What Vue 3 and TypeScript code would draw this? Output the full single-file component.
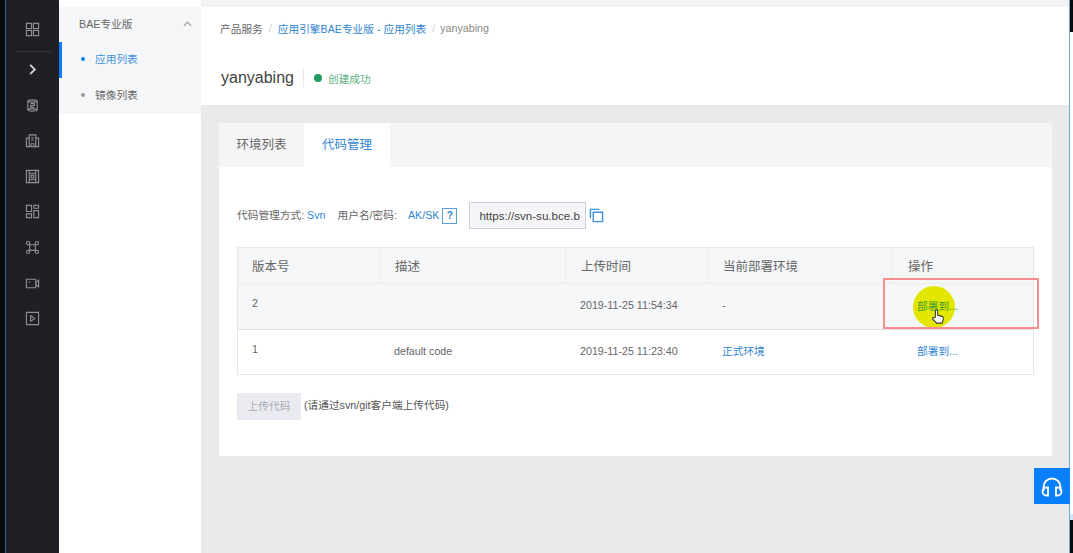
<script setup lang="ts">
const railIcons: string[] = [
  "M3 3.5c0-1 2-1.5 5-1.5s5 .5 5 1.5v9c0 1-2 1.5-5 1.5s-5-.5-5-1.5zM3 3.8c1 .8 9 .8 10 0M3 12.2c1-.8 9-.8 10 0M6 6h4v2H6v2h4",
  "M1.5 5.5h3v9h-3zM11.5 5.5h3v9h-3zM4.5 2h7v12.5h-7zM6.5 5h3M6.5 7.5h3M6.5 14.5v-3h3v3",
  "M1.5 1.5h13v13h-13zM4.5 1.5v13M11.5 1.5v13M4.5 4.5h7M4.5 11.5h7M6.5 6.5h3v3h-3z",
  "M1.5 1.5h5.5v6.5H1.5zM9.5 1.5h5v3h-5zM9.5 7h5v7.5h-5zM1.5 10.5h5.5v4H1.5z",
  "M5 5h6v6H5zM5 5H3a1.7 1.7 0 1 1 2-2zM11 5V3a1.7 1.7 0 1 1 2 2zM11 11h2a1.7 1.7 0 1 1-2 2zM5 11v2a1.7 1.7 0 1 1-2-2z",
  "M1.5 3.5h10v9h-10zM11.5 7l3-2.5v7l-3-2.5zM4 6.5h1.5",
  "M1.5 1.5h13v13h-13zM6 5l4.5 3L6 11z",
];

interface VersionRow {
  version: string;
  desc: string;
  time: string;
  env: string;
  active: boolean;
}

const rows: VersionRow[] = [
  { version: "2", desc: "", time: "2019-11-25 11:54:34", env: "-", active: true },
  { version: "1", desc: "default code", time: "2019-11-25 11:23:40", env: "正式环境", active: false },
];
</script>

<template>
  <div class="shell">
    <aside class="rail">
      <svg class="rail-icon" viewBox="0 0 16 16"><path d="M1.5 1.5h5.5v5.5H1.5zM9 1.5h5.5v5.5H9zM1.5 9h5.5v5.5H1.5zM9 9h5.5v5.5H9z" /></svg>
      <div class="rail-line"></div>
      <svg class="rail-icon rail-arrow" viewBox="0 0 16 16"><path d="M5.5 3l5 5-5 5" /></svg>
      <svg v-for="(d, i) in railIcons" :key="i" class="rail-icon" viewBox="0 0 16 16"><path :d="d" /></svg>
    </aside>

    <nav class="side">
      <div class="side-panel">
        <div class="side-head">
          <span>BAE专业版</span>
          <svg class="side-caret" viewBox="0 0 10 6"><path d="M1 5l4-4 4 4" /></svg>
        </div>
        <a class="side-item on"><i></i>应用列表</a>
        <a class="side-item"><i></i>镜像列表</a>
      </div>
    </nav>

    <main class="main">
      <header class="page-head">
        <div class="crumbs">
          <span>产品服务</span>
          <em>/</em>
          <a>应用引擎BAE专业版 - 应用列表</a>
          <em>/</em>
          <span class="crumb-now">yanyabing</span>
        </div>
        <div class="title-row">
          <h1>yanyabing</h1>
          <span class="status"><i></i>创建成功</span>
        </div>
      </header>

      <section class="card">
        <div class="tabs">
          <span class="tab">环境列表</span>
          <span class="tab on">代码管理</span>
        </div>
        <div class="card-body">
          <div class="repo">
            <span class="repo-text">代码管理方式:</span>
            <a class="repo-text repo-svn">Svn</a>
            <span class="repo-text repo-user">用户名/密码:</span>
            <a class="repo-text repo-ak">AK/SK</a>
            <span class="help">?</span>
            <div class="url">https://svn-su.bce.b</div>
            <svg class="copy" viewBox="0 0 16 16"><path d="M4.5 4.5h10v10h-10zM1.5 11V1.5H11" /></svg>
          </div>

          <div class="table">
            <div class="tr th">
              <div>版本号</div>
              <div>描述</div>
              <div>上传时间</div>
              <div>当前部署环境</div>
              <div>操作</div>
            </div>
            <div v-for="row in rows" :key="row.version" class="tr" :class="{ hover: row.active }">
              <div class="td-ver">{{ row.version }}</div>
              <div>{{ row.desc }}</div>
              <div>{{ row.time }}</div>
              <div><a v-if="row.env !== '-'">{{ row.env }}</a><template v-else>-</template></div>
              <div class="td-op"><a>部署到...</a></div>
            </div>
            <div class="spot"></div>
            <div class="mark"></div>
            <svg class="hand" viewBox="0 0 16 20">
              <path d="M5 10V2.6a1.3 1.3 0 0 1 2.6 0V8l4.4 1c1.4.4 2 1.2 2 2.5 0 2-.4 3.500-1.200 5.500H6.500L2 12.500c-.9-1 .3-2.400 1.500-1.600z" />
            </svg>
          </div>

          <div class="upload">
            <span class="upload-btn">上传代码</span>
            <span class="upload-tip">(请通过svn/git客户端上传代码)</span>
          </div>
        </div>
      </section>
    </main>

    <div class="edge">
      <div class="edge-top"></div>
      <div class="edge-mid"></div>
      <div class="edge-bottom"></div>
    </div>

    <button class="service" type="button">
      <svg viewBox="0 0 24 24"><path d="M3.500 15V11a8.500 8.500 0 0 1 17 0v4M8 11.500v8H6.500a3.900 3.900 0 0 1 0-8zM16 11.500v8h1.500a3.900 3.900 0 0 0 0-8z" /></svg>
    </button>
  </div>
</template>

<style>
html,
body {
  margin: 0;
  overflow: hidden;
}
</style>

<style scoped>
.shell {
  display: flex;
  height: 553px;
  width: 1073px;
  position: relative;
  overflow: hidden;
  font-family: "Liberation Sans", "Noto Sans CJK SC", sans-serif;
  font-size: 10.7px;
  color: #666;
}

a {
  color: #2f86d1;
}

.rail {
  flex: none;
  width: 53px;
  background: #1f2026;
  border-left: 5px solid #0a0a0a;
  box-shadow: inset 1px 0 0 #2c5d92;
  padding-top: 22px;
  display: flex;
  flex-direction: column;
  align-items: center;
  padding-left: 1px;
}

.rail-icon {
  width: 15px;
  height: 15px;
  margin-bottom: 20.6px;
  fill: none;
  stroke: #8e8f92;
  stroke-width: 1.2;
}

.rail-icon:first-child {
  margin-bottom: 0;
}

.rail-line {
  width: 36px;
  height: 1px;
  background: #34353a;
  margin: 14px 0 10px;
}

.rail-arrow {
  stroke: #d0d0d2;
  stroke-width: 2;
}

.side {
  flex: none;
  width: 142px;
  background: #fff;
  padding-top: 7px;
}

.side-panel {
  background: #f5f6f8;
  height: 107px;
}

.side-head {
  height: 35px;
  display: flex;
  align-items: center;
  justify-content: space-between;
  box-sizing: border-box;
  padding: 0 9px 2px 20px;
  color: #666;
}

.side-caret {
  width: 9px;
  height: 6px;
  fill: none;
  stroke: #999;
  stroke-width: 1.3;
}

.side-item {
  display: flex;
  align-items: center;
  height: 36px;
  padding-left: 22px;
  padding-bottom: 3px;
  color: #666;
  box-sizing: border-box;
}

.side-item i {
  width: 4px;
  height: 4px;
  border-radius: 50%;
  background: #999;
  margin-right: 10px;
}

.side-item.on {
  color: #3f93dc;
  border-left: 3px solid #0a7ffb;
  padding-left: 19px;
}

.side-item.on i {
  background: #0a7ffb;
}

.main {
  flex: none;
  width: 868px;
  background: #e8eaeb;
  display: flex;
  flex-direction: column;
}

.page-head {
  margin-top: 7px;
  height: 98px;
  background: #fff;
  padding: 14px 0 0 19px;
  box-sizing: border-box;
  box-shadow: 0 -7px 0 #f3f3f3;
}

.crumbs {
  display: flex;
  align-items: center;
  gap: 6px;
  height: 14px;
  color: #666;
}

.crumbs em {
  font-style: normal;
  color: #ccc;
}

.crumb-now {
  color: #888;
  margin-left: -1px;
}

.title-row {
  display: flex;
  align-items: center;
  margin: 31px 0 0 1px;
  height: 24px;
}

h1 {
  margin: 0;
  font-size: 16px;
  font-weight: 400;
  color: #444;
  padding-right: 9px;
  border-right: 1px solid #e8e8e8;
  line-height: 18px;
}

.status {
  display: flex;
  align-items: center;
  margin-left: 10px;
  color: #5cb07f;
}

.status i {
  width: 8px;
  height: 8px;
  border-radius: 50%;
  background: #1f9d5c;
  margin-right: 6px;
}

.card {
  margin: 18px 17px 0 18px;
  height: 333px;
  background: #fff;
}

.tabs {
  display: flex;
  height: 44px;
  background: #f5f5f5;
}

.tab {
  width: 85px;
  display: flex;
  align-items: center;
  justify-content: center;
  box-sizing: border-box;
  padding-bottom: 4px;
  font-size: 12.5px;
  color: #666;
}

.tab.on {
  width: 86px;
  background: #fff;
  color: #2f86d1;
}

.card-body {
  padding: 35px 18px 0;
}

.repo {
  display: flex;
  align-items: center;
  height: 27px;
  color: #666;
}

.repo-text {
  margin-bottom: 2px;
}

.repo-svn {
  margin-left: 3px;
}

.repo-user {
  margin-left: 12px;
}

.repo-ak {
  margin-left: 11px;
}

.help {
  width: 13px;
  height: 14px;
  border: 1px solid #5a9fdc;
  margin-left: 3px;
  color: #2f86d1;
  font-size: 10px;
  font-weight: 700;
  text-align: center;
  line-height: 14px;
}

.url {
  width: 117px;
  height: 27px;
  margin-left: 12px;
  box-sizing: border-box;
  border: 1px solid #c8cedb;
  background: #f5f5f7;
  padding: 0 9px;
  font-size: 11.6px;
  line-height: 25px;
  color: #444;
  white-space: nowrap;
}

.copy {
  width: 15px;
  height: 15px;
  margin-left: 3px;
  fill: none;
  stroke: #3f93dc;
  stroke-width: 1.5;
}

.table {
  position: relative;
  margin-top: 18px;
  border: 1px solid #e4e6ea;
  color: #666;
}

.tr {
  display: grid;
  grid-template-columns: 141px 186px 142px 185px 1fr;
  height: 44px;
  padding-bottom: 3px;
  align-items: center;
  box-sizing: border-box;
}

.tr > div {
  padding: 0 15px;
  box-sizing: border-box;
}

.tr > div:first-child {
  padding-left: 14px;
}

.tr.hover {
  height: 46px;
  background: #f6f7f9;
  border-bottom: 1px solid #e0e2e5;
}

.th {
  height: 36px;
  padding-bottom: 0;
  background: #f5f6f8;
  border-bottom: 1px solid #eceef1;
  font-size: 12.5px;
  align-items: stretch;
}

.th > div {
  display: flex;
  align-items: center;
  border-left: 1px solid #eceef1;
}

.th > div:first-child {
  border-left: 0;
}

.td-ver {
  position: relative;
  top: -2px;
}

.td-op {
  padding-left: 25px !important;
}

.spot {
  position: absolute;
  left: 675px;
  top: 38px;
  width: 42px;
  height: 42px;
  border-radius: 50%;
  background: #e2e600;
}

.mark {
  position: absolute;
  left: 645px;
  top: 30px;
  width: 156px;
  height: 51px;
  box-sizing: border-box;
  border: 2px solid #f98c8c;
}

.hand {
  position: absolute;
  left: 693px;
  top: 60px;
  width: 14px;
  height: 18px;
  fill: #fff;
  stroke: #333;
  stroke-width: 1.2;
}

.td-op a {
  position: relative;
  z-index: 1;
}

.hover .td-op a {
  color: #3d9a2a;
}

.upload {
  display: flex;
  align-items: center;
  margin-top: 18px;
}

.upload-btn {
  width: 64px;
  height: 27px;
  box-sizing: border-box;
  padding-bottom: 3px;
  background: #e9ebf1;
  color: #a9adb8;
  display: flex;
  align-items: center;
  justify-content: center;
}

.upload-tip {
  margin: 0 0 4px 3px;
  color: #555;
}

.edge {
  flex: 1;
  display: flex;
  flex-direction: column;
  background: #fff;
  border-left: 1px solid #6eaadf;
}

.edge-top {
  height: 32px;
  background: #0a0a0a;
}

.edge-mid {
  flex: 1;
  background: #fff;
}

.edge-bottom {
  height: 33px;
  background: #0a0a0a;
  box-shadow: 0 -6px 0 #cfe4f5;
}

.service {
  position: absolute;
  left: 1034px;
  top: 468px;
  width: 36px;
  height: 36px;
  border: 0;
  padding: 3px 0 0;
  background: #0a7ffb;
  display: flex;
  align-items: center;
  justify-content: center;
}

.service svg {
  width: 24px;
  height: 24px;
  fill: none;
  stroke: #fff;
  stroke-width: 1.8;
}
</style>
